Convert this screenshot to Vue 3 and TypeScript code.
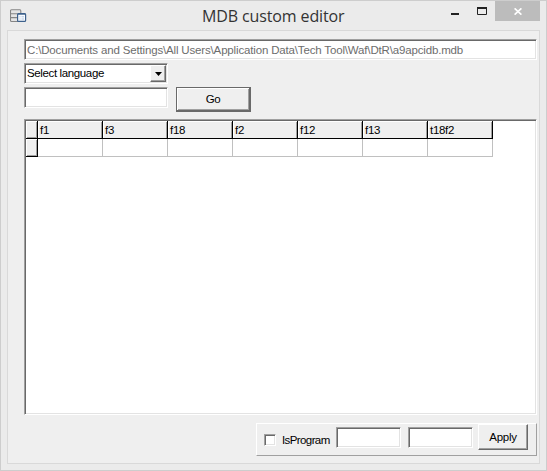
<script setup lang="ts">
import { ref } from 'vue'

const path = ref('C:\\Documents and Settings\\All Users\\Application Data\\Tech Tool\\Waf\\DtR\\a9apcidb.mdb')
const search = ref('')
const isProgram = ref(false)
const from = ref('')
const to = ref('')

const columns = ['f1', 'f3', 'f18', 'f2', 'f12', 'f13', 't18f2']
</script>

<template>
  <div class="window">
    <header class="titlebar">
      <svg class="app-icon" width="17" height="15" viewBox="0 0 17 15">
        <path d="M1 1.5h9.5v11H1z" fill="#e4e4e4" />
        <path d="M8 12.5H1.5Q.5 12.5.5 11.5V2Q.5 .8 1.5 .8H10Q10.8 .8 10.8 2V4M1 4.7h7M1 8.6h6" fill="none" stroke="#858585" stroke-width="1.1" />
        <rect x="7.6" y="4.6" width="8" height="7.8" rx="1" fill="#f8fbff" stroke="#3d618c" stroke-width="1.2" />
        <path d="M8 5h7.4" stroke="#3d618c" stroke-width="1.3" />
        <path d="M9.5 7.8h1M11.5 7.8h2.5M9.5 10h1M11.5 10h2.5" stroke="#b3c6df" />
      </svg>
      <h1 class="title">MDB custom editor</h1>
      <div class="controls">
        <button class="control control--min" aria-label="Minimize">
          <svg width="8" height="2" viewBox="0 0 8 2"><path d="M0 1h8" stroke="#222" stroke-width="2" /></svg>
        </button>
        <button class="control control--max" aria-label="Maximize">
          <svg width="10" height="8" viewBox="0 0 10 8">
            <path d="M.5 1v6.5h9V1" fill="none" stroke="#222" />
            <path d="M0 1h10" stroke="#222" stroke-width="2" />
          </svg>
        </button>
        <button class="control control--close" aria-label="Close">
          <svg width="8" height="7" viewBox="0 0 8 7"><path d="M.6 .3l6.8 6.4M7.4 .3L.6 6.7" stroke="#fff" stroke-width="1.6" /></svg>
        </button>
      </div>
    </header>

    <main class="client">
      <input v-model="path" class="field field--path" disabled>
      <div class="combo">
        <span class="combo-text">Select language</span>
        <button class="combo-arrow" aria-label="Open list">
          <svg width="7" height="4" viewBox="0 0 7 4"><path d="M0 0h7L3.5 4z" fill="#000" /></svg>
        </button>
      </div>
      <div class="search-row">
        <input v-model="search" class="field field--search">
        <button class="go">Go</button>
      </div>

      <div class="grid">
        <div class="row">
          <div class="marker" />
          <div v-for="name in columns" :key="name" class="head">{{ name }}</div>
        </div>
        <div class="row">
          <div class="marker" />
          <div v-for="name in columns" :key="name" class="cell" />
        </div>
      </div>

      <div class="panel">
        <label class="check">
          <input v-model="isProgram" type="checkbox" class="box">
          <span class="check-text">IsProgram</span>
        </label>
        <input v-model="from" class="field field--small">
        <input v-model="to" class="field field--small">
        <button class="apply">Apply</button>
      </div>
    </main>
  </div>
</template>

<style>
body {
  margin: 0;
  background: #ebebeb;
}
</style>

<style scoped>
.window,
.window * {
  box-sizing: border-box;
}

.window {
  width: 547px;
  height: 471px;
  padding: 0 6px 6px;
  border: 1px solid #cdcdcd;
  background: #ebebeb;
  font-family: "Liberation Sans", Arial, sans-serif;
  font-size: 11.5px;
  color: #000;
}

.titlebar {
  display: flex;
  align-items: flex-start;
  height: 29px;
}

.app-icon {
  flex: none;
  margin: 8px 0 0 3px;
}

.title {
  flex: 1;
  margin: 4px 0 0 175px;
  font: 400 16px/22px "Open Sans", "Noto Sans", sans-serif;
  letter-spacing: -0.12px;
  white-space: nowrap;
  color: #333;
}

.controls {
  display: flex;
}

.control {
  display: flex;
  align-items: center;
  justify-content: center;
  width: 27px;
  height: 20px;
  padding: 0;
  border: 0;
  background: transparent;
}

.control--min {
  padding-top: 5px;
}

.control--close {
  width: 45px;
  background: #bcbcbc;
}

.client {
  display: flex;
  flex-direction: column;
  width: 533px;
  height: 434px;
  padding: 8px 2px 0 16px;
  border: 1px solid #d9d9d9;
  background: #efefef;
}

.field,
.combo,
.grid {
  border: 1px solid;
  border-color: #a0a0a0 #fff #fff #a0a0a0;
  border-radius: 0;
  background: #fff;
  box-shadow: inset 1px 1px 0 #696969, inset -1px -1px 0 #e3e3e3;
}

.field {
  height: 21px;
  padding: 0 2px;
  outline: 0;
  font: inherit;
}

.field--path {
  width: 513px;
  margin-bottom: 3px;
  color: #6d6d6d;
  letter-spacing: -0.16px;
}

.combo {
  display: flex;
  width: 144px;
  height: 21px;
  margin-bottom: 3px;
  padding: 1px;
}

.combo-text {
  flex: 1;
  padding-left: 1px;
  line-height: 17px;
  letter-spacing: -0.37px;
}

.combo-arrow {
  display: flex;
  align-items: center;
  justify-content: center;
  width: 16px;
  height: 17px;
  padding: 0;
  border: 1px solid;
  border-color: #fff #696969 #696969 #fff;
  background: #efefef;
  box-shadow: inset -1px -1px 0 #a0a0a0;
}

.search-row {
  display: flex;
  gap: 8px;
  height: 25px;
  margin-bottom: 7px;
}

.field--search {
  width: 144px;
}

.go,
.apply {
  padding: 0;
  border: 1px solid #696969;
  border-radius: 0;
  background: #efefef;
  color: #000;
  font: inherit;
  letter-spacing: -0.3px;
}

.go {
  width: 75px;
  height: 25px;
  border-right-width: 2px;
  border-bottom-width: 2px;
  box-shadow: inset 1px 1px 0 #fff, inset -1px -1px 0 #a0a0a0;
}

.grid {
  width: 513px;
  height: 296px;
  margin-bottom: 8px;
  padding: 1px;
}

.row {
  display: flex;
  height: 18px;
}

.marker {
  width: 12px;
  border-right: 1px solid #000;
  border-bottom: 1px solid #000;
  background: #efefef;
  box-shadow: inset 1px 1px 0 #fff, inset -1px -1px 0 #a0a0a0;
}

.head {
  width: 65px;
  padding-left: 2px;
  border-right: 1px solid #000;
  border-bottom: 1px solid #000;
  background: #efefef;
  box-shadow: inset 1px 1px 0 #fff, inset -1px 0 0 #a0a0a0;
  line-height: 18px;
  letter-spacing: -0.3px;
}

.cell {
  width: 65px;
  border-right: 1px solid #c0c0c0;
  border-bottom: 1px solid #c0c0c0;
}

.panel {
  display: flex;
  align-self: flex-end;
  width: 281px;
  height: 33px;
  padding: 0 0 0 7px;
  border: 1px solid;
  border-color: #fff #a0a0a0 #a0a0a0 #fff;
}

.check {
  display: flex;
  align-items: center;
  gap: 6px;
  width: 72px;
  white-space: nowrap;
}

.check-text {
  letter-spacing: -0.6px;
}

.box {
  flex: none;
  appearance: none;
  width: 12px;
  height: 12px;
  margin: 0;
  border: 1px solid;
  border-color: #a0a0a0 #fff #fff #a0a0a0;
  background: #fff;
  box-shadow: inset 1px 1px 0 #696969, inset -1px -1px 0 #e3e3e3;
}

.field--small {
  width: 65px;
  margin: 3px 7px 0 0;
}

.apply {
  width: 50px;
  height: 26px;
  margin-left: -2px;
  border-color: #fff #696969 #696969 #fff;
  box-shadow: inset -1px -1px 0 #a0a0a0;
}
</style>
